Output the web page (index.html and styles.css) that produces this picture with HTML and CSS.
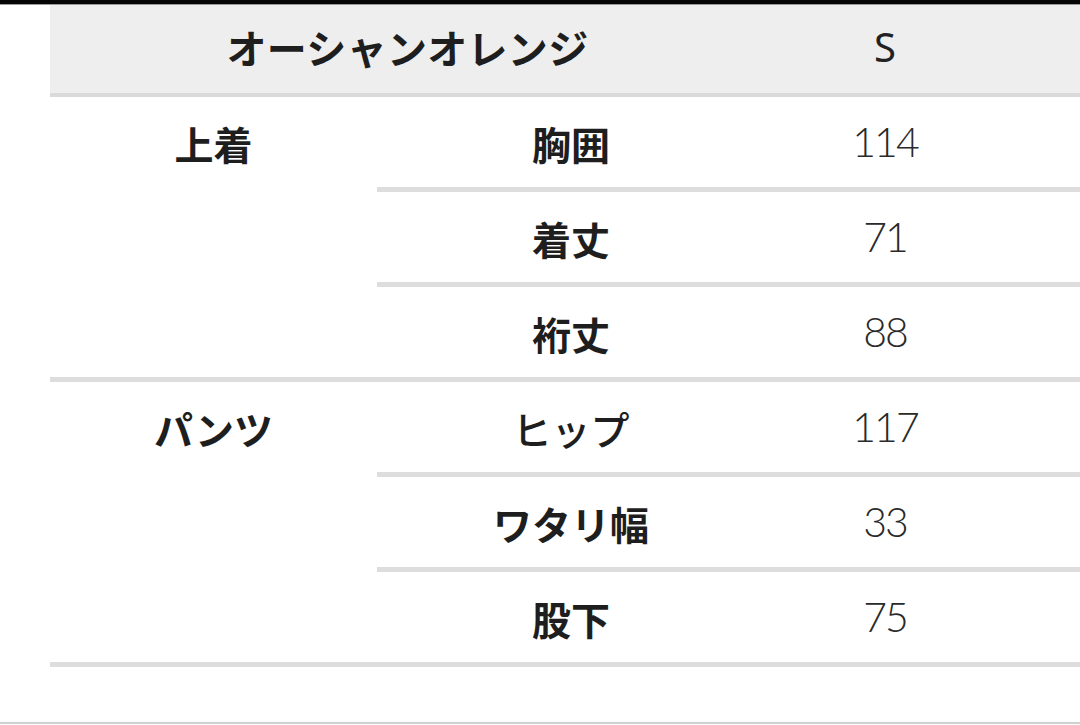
FILE: index.html
```html
<!DOCTYPE html>
<html lang="ja">
<head>
<meta charset="utf-8">
<link rel="stylesheet" href="styles.css">
</head>
<body>
<div class="topbar"></div>
<div class="table">
  <div class="head">
    <div class="head-name">オーシャンオレンジ</div>
    <div class="head-size">S</div>
    <div class="fill"></div>
  </div>
  <div class="group">
    <div class="group-label">上着</div>
    <div class="subrows">
      <div class="sub"><div class="item">胸囲</div><div class="num">114</div></div>
      <div class="sub"><div class="item">着丈</div><div class="num">71</div></div>
      <div class="sub"><div class="item">裄丈</div><div class="num">88</div></div>
    </div>
  </div>
  <div class="group">
    <div class="group-label">パンツ</div>
    <div class="subrows">
      <div class="sub"><div class="item item-light">ヒップ</div><div class="num">117</div></div>
      <div class="sub"><div class="item">ワタリ幅</div><div class="num">33</div></div>
      <div class="sub"><div class="item">股下</div><div class="num">75</div></div>
    </div>
  </div>
</div>
<div class="bottomline"></div>
</body>
</html>
```
FILE: styles.css
```css
html, body {
  margin: 0;
  padding: 0;
  background: #ffffff;
  height: 725px;
  overflow: hidden;
  font-family: "Noto Sans CJK JP", "Noto Sans", sans-serif;
  color: #1e1e1e;
}
body {
  display: flex;
  flex-direction: column;
}
.topbar {
  height: 4px;
  background: #050505;
  border-bottom: 1px solid #9a9a9a;
}
.table {
  margin-left: 50px;
  flex: 1;
}
.head {
  display: flex;
  height: 88px;
  background: #eeeeee;
  border-bottom: 4px solid #dadada;
  align-items: center;
}
.head-name {
  width: 715px;
  text-align: center;
  font-size: 40px;
  font-weight: 700;
  letter-spacing: 0.3px;
  line-height: 1;
  margin-top: -4px;
}
.head-size {
  width: 240px;
  text-align: center;
  font-family: "Noto Sans", sans-serif;
  font-size: 40px;
  font-weight: 400;
  color: #222;
  line-height: 1;
  margin-top: -4px;
}
.fill { flex: 1; }
.group {
  display: flex;
  border-bottom: 5px solid #dddddd;
}
.group-label {
  width: 327px;
  height: 90px;
  display: flex;
  align-items: center;
  justify-content: center;
  font-size: 39px;
  font-weight: 700;
  line-height: 1;
  padding-top: 2px;
  box-sizing: border-box;
}
.subrows {
  flex: 1;
  display: flex;
  flex-direction: column;
}
.sub {
  display: flex;
  height: 90px;
  align-items: center;
  border-bottom: 5px solid #dddddd;
}
.sub:last-child {
  border-bottom: none;
}
.item {
  width: 388px;
  text-align: center;
  font-size: 39px;
  font-weight: 700;
  line-height: 1;
  padding-top: 2px;
}
.item-light {
  font-weight: 500;
}
.num {
  width: 240px;
  text-align: center;
  font-family: "Lato", sans-serif;
  font-weight: 300;
  font-size: 41px;
  letter-spacing: -2px;
  color: #2a2a2a;
  line-height: 1;
  margin-top: -2px;
}
.bottomline {
  height: 2px;
  background: #d0d0d0;
  margin-bottom: 1px;
}
```
